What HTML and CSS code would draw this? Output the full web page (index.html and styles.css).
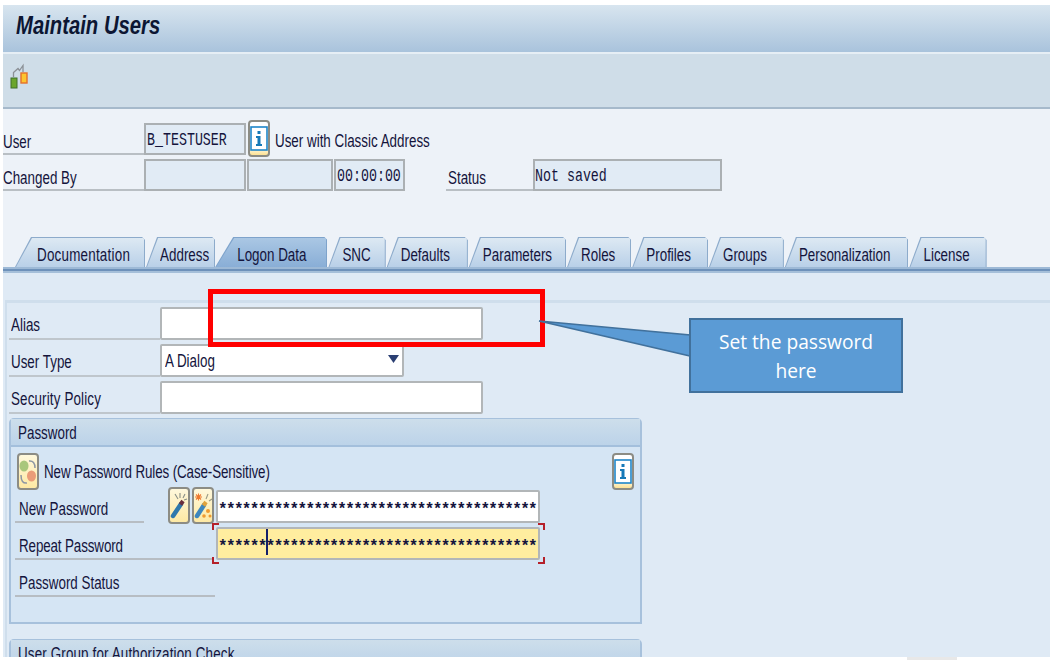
FILE: index.html
```html
<!DOCTYPE html>
<html lang="en">
<head>
<meta charset="utf-8">
<title>Maintain Users</title>
<link rel="stylesheet" href="styles.css">
</head>
<body>
<div class="page">
  <div class="window">
    <header class="title"><h1><span class="t">Maintain Users</span></h1></header>
    <div class="toolbar">
      <svg class="tool-icon" width="20" height="26" viewBox="0 0 20 26">
        <path d="M3.500 14 V9.500 L8 5.500 L9.500 7.500 L13 2.500 V9" fill="none" stroke="#8b9096" stroke-width="1.300"/>
        <rect x="1" y="15" width="6" height="10" fill="#6aa52c" stroke="#3f6f2a"/>
        <rect x="11" y="10" width="6" height="10" fill="#fdc52f" stroke="#e4702a" stroke-width="1.400"/>
      </svg>
    </div>
    <section class="head">
      <div class="head-row">
        <label class="head-label"><span class="t">User</span></label>
        <div class="ro mono w-user"><span class="t">B_TESTUSER</span></div>
        <button class="icon-btn info-btn head-info">
          <svg width="18" height="28" viewBox="0 0 18 28"><rect x="1" y="2" width="16" height="23" fill="#fff" stroke="#1f86c9" stroke-width="1.600"/><path d="M7.500 6h3v3h-3zM6 11h4.500v8H12v2H6v-2h1.500v-6H6z" fill="#1579b8"/></svg>
        </button>
        <span class="head-note"><span class="t">User with Classic Address</span></span>
      </div>
      <div class="head-row second">
        <label class="head-label"><span class="t">Changed By</span></label>
        <div class="ro w-user"></div>
        <div class="ro w-date"></div>
        <div class="ro mono w-time"><span class="t">00:00:00</span></div>
        <label class="head-label status-label"><span class="t">Status</span></label>
        <div class="ro mono w-status"><span class="t">Not saved</span></div>
      </div>
    </section>
    <nav class="tabs">
      <a class="tab first"><span class="t">Documentation</span></a>
      <a class="tab tab-address"><span class="t">Address</span></a>
      <a class="tab active"><span class="t">Logon Data</span></a>
      <a class="tab tab-snc"><span class="t">SNC</span></a>
      <a class="tab"><span class="t">Defaults</span></a>
      <a class="tab tab-parameters"><span class="t">Parameters</span></a>
      <a class="tab tab-roles"><span class="t">Roles</span></a>
      <a class="tab tab-compact"><span class="t">Profiles</span></a>
      <a class="tab tab-compact"><span class="t">Groups</span></a>
      <a class="tab"><span class="t">Personalization</span></a>
      <a class="tab tab-compact"><span class="t">License</span></a>
    </nav>
    <main class="content">
      <div class="panel">
        <div class="form-row">
          <label class="form-label"><span class="t">Alias</span></label>
          <div class="input w-alias"></div>
        </div>
        <div class="form-row">
          <label class="form-label"><span class="t">User Type</span></label>
          <div class="input w-select"><span class="t">A Dialog</span><svg class="caret-down" width="11" height="8" viewBox="0 0 11 8"><path d="M0 0h11L5.500 8z" fill="#2b3f73"/></svg></div>
        </div>
        <div class="form-row">
          <label class="form-label"><span class="t wide-text">Security Policy</span></label>
          <div class="input w-alias"></div>
        </div>
        <section class="group pw-group">
          <div class="group-head"><span class="t">Password</span></div>
          <div class="group-body">
            <div class="rule-row">
              <button class="icon-btn rule-btn">
                <svg width="18" height="32" viewBox="0 0 18 32">
                  <ellipse cx="5" cy="10" rx="4.500" ry="5.500" fill="#a9c77c"/>
                  <ellipse cx="12.500" cy="20" rx="4.500" ry="5.500" fill="#ea9c78"/>
                  <path d="M10 5 C14 4.500 16 7 16 12M8 27 C4 27.500 2 25 2 19" fill="none" stroke="#8d97a3" stroke-width="1.500"/>
                </svg>
              </button>
              <span class="rule-text"><span class="t narrow-text">New Password Rules (Case-Sensitive)</span></span>
              <button class="icon-btn info-btn rule-info">
                <svg width="18" height="28" viewBox="0 0 18 28"><rect x="1" y="2" width="16" height="23" fill="#fff" stroke="#1f86c9" stroke-width="1.600"/><path d="M7.500 6h3v3h-3zM6 11h4.500v8H12v2H6v-2h1.500v-6H6z" fill="#1579b8"/></svg>
              </button>
            </div>
            <div class="pw-row">
              <label class="pw-label short"><span class="t">New Password</span></label>
              <button class="icon-btn wand-btn">
                <svg width="18" height="32" viewBox="0 0 18 32">
                  <path d="M3 26 L11 14" stroke="#2f79ac" stroke-width="4.500" stroke-linecap="round"/>
                  <path d="M10.500 14.500 L13 11" stroke="#6b2f3c" stroke-width="4"/>
                  <path d="M5 4l3 5M10 3v5M15 4l-2 4M17 9l-3 1" stroke="#8a8f86" stroke-width="1.100" fill="none"/>
                </svg>
              </button>
              <button class="icon-btn wand-btn">
                <svg width="18" height="32" viewBox="0 0 18 32">
                  <path d="M3 26 L10 15" stroke="#3d86bd" stroke-width="4.500" stroke-linecap="round"/>
                  <path d="M9.500 15.500 L12 12" stroke="#e0a23a" stroke-width="4"/>
                  <path d="M1 7h7M4.500 3.500v7M2 4.500l5 5M7 4.500l-5 5" stroke="#ee7a30" stroke-width="1.100"/>
                  <path d="M12 9l2-5M15 11l3-2" stroke="#9a9a86" stroke-width="1.100"/>
                  <circle cx="14" cy="21" r="2" fill="#ef9a2f"/><circle cx="10" cy="26" r="1.800" fill="#ef9a2f"/><circle cx="16" cy="26" r="1.500" fill="#ef9a2f"/>
                </svg>
              </button>
              <div class="input pw-input mono"><span class="stars">****************************************</span></div>
            </div>
            <div class="pw-row">
              <label class="pw-label wide"><span class="t narrow-text">Repeat Password</span></label>
              <div class="focus">
                <div class="input pw-input mono active"><span class="stars">******</span><span class="cursor"></span><span class="stars">**********************************</span></div>
                <i class="corner tl"></i><i class="corner tr"></i><i class="corner bl"></i><i class="corner br"></i>
              </div>
            </div>
            <div class="pw-row">
              <label class="pw-label full"><span class="t">Password Status</span></label>
            </div>
          </div>
        </section>
        <section class="group auth-group">
          <div class="group-head"><span class="t wide-text">User Group for Authorization Check</span></div>
        </section>
      </div>
    </main>
  </div>
  <div class="annotation-box"></div>
  <svg class="annotation-tail" width="155" height="40" viewBox="0 0 155 40">
    <path d="M1 1 L152 15 V36 Z" fill="#5b9bd5" stroke="#41719c" stroke-width="1.500"/>
  </svg>
  <div class="annotation-note">Set the password here</div>
</div>
</body>
</html>
```

FILE: styles.css
```css
* { box-sizing: border-box; }
html, body { margin: 0; padding: 0; background: #fff; }
body { font-family: "Liberation Sans", Arial, sans-serif; font-size: 13.400px; color: #14143c; }

/* The source is a vertically stretched capture: glyphs keep their natural width and grow in height. */
.t { display: inline-block; transform: scaleY(1.38); white-space: nowrap; }
.wide-text { letter-spacing: .15px; }
.narrow-text { letter-spacing: -.12px; }

.page { position: relative; width: 1050px; height: 660px; padding: 5px 0 3px 3px; overflow: hidden; background: #fff; }
.page::after { content: ""; position: absolute; left: 907px; bottom: 0; width: 50px; height: 3px; background: #e8e8e8; }
.window { height: 652px; display: flex; flex-direction: column; overflow: hidden; }

.title { height: 49px; flex: none; display: flex; align-items: center; padding-left: 13px; padding-bottom: 6px;
  background: linear-gradient(#d8e5ef, #a9c3dc); border-bottom: 2px solid #e6eef5; }
.title h1 { margin: 0; font-size: 20.300px; font-weight: bold; font-style: italic; color: #0c1633; }
.title .t { transform: scaleY(1.26); }

.toolbar { height: 55px; flex: none; display: flex; align-items: flex-start; padding: 9px 0 0 7px;
  background: #cfdde8; border-bottom: 2px solid #a6b9cb; }

.head { flex: none; height: 128px; padding-top: 15px; background: #edf2f8; }
.head-row { display: flex; align-items: flex-end; height: 31px; }
.head-row.second { margin-top: 5px; }
.head-label { width: 141px; height: 100%; line-height: 36px; border-bottom: 2px solid #b9bfc4; }
.status-label { width: 87px; margin-left: 40px; padding-left: 2px; }
.ro { height: 32px; border: 2px solid #abb0b3; background: #e1ebf5; margin-right: 1px; line-height: 31px; }
.mono { font-family: "Liberation Mono", monospace; font-size: 13.300px; }
.w-user { width: 102px; padding-left: 1px; }
.w-date { width: 86px; }
.w-time { width: 71px; padding-left: 1px; }
.w-status { width: 189px; }

.icon-btn { padding: 0; flex: none; display: flex; align-items: center; justify-content: center; width: 22px; height: 37px;
  border: 2px solid #8c8c84; border-radius: 4px; background: linear-gradient(#fff8dc, #fde9a4); }
.info-btn { background: linear-gradient(#fff 72%, #fde293); }
.head-info { margin: 0 5px 0 1px; align-self: flex-end; position: relative; top: 2px; }
.head-note { line-height: 28px; }

.tabs { flex: none; display: flex; height: 36px; padding: 0 0 6px 12px;
  background: linear-gradient(#edf2f8 0 30px, #9db9d6 30px 32px, #6d91ba 32px 34px, #a5bfd9 34px 36px); }
.tab { position: relative; z-index: 1; display: block; height: 30px; padding: 0 18px 0 14px; margin-right: 1px; line-height: 35px;
  background: #8dabcb; clip-path: polygon(11px 0, calc(100% - 3px) 0, 100% 3px, 100% 100%, 0 100%); }
.tab::before { content: ""; position: absolute; z-index: -1; inset: 1px 1px 0 1px;
  background: linear-gradient(#dde9f3, #b9d0e8); clip-path: polygon(11px 0, 100% 0, 100% 100%, 0 100%); }
.tab.first { padding: 0 15px 0 22px; letter-spacing: .23px; clip-path: polygon(16px 0, calc(100% - 3px) 0, 100% 3px, 100% 100%, 0 100%); }
.tab.first::before { clip-path: polygon(16px 0, 100% 0, 100% 100%, 0 100%); }
.tab.active { padding: 0 21px 0 22px; margin-left: -1px; z-index: 2; background: #7ea3cb; clip-path: polygon(18px 0, calc(100% - 3px) 0, 100% 3px, 100% 100%, 0 100%); }
.tab.active::before { background: linear-gradient(#aac7e4, #89aed6); clip-path: polygon(18px 0, 100% 0, 100% 100%, 0 100%); }
.tab-address { padding-right: 6px; }
.tab-snc { padding-right: 15px; }
.tab-parameters { padding-right: 14px; }
.tab-roles { padding-right: 16px; }
.tab-compact { padding-right: 17px; }

.content { flex: 1; min-height: 0; background: #dfeaf5; padding: 27px 0 0 2px; }
.panel { height: 100%; border-top: 3px solid #cfdeec; border-left: 2px solid #cfdeec; padding: 4px 0 0 2px; }

.form-row { display: flex; height: 33px; margin-bottom: 4px; }
.form-label { width: 151px; padding-left: 2px; line-height: 36px; border-bottom: 2px solid #bfc6cc; }
.input { height: 33px; background: #fff; border: 2px solid #b2b6b8; border-radius: 2px; line-height: 29px; }
.w-alias { width: 323px; }
.w-select { width: 244px; padding-left: 3px; display: flex; justify-content: space-between; }
.caret-down { margin: 9px 3px 0 0; }

.group { width: 633px; border: 2px solid #a7c1dc; border-radius: 5px 5px 0 0; background: #d5e5f4; }
.group-head { height: 28px; padding-left: 7px; line-height: 27px;
  background: linear-gradient(#cddeeb, #bcd3e9); border-bottom: 2px solid #a3bfdc; margin-top: -1px; }
.pw-group { height: 206px; }
.auth-group { margin-top: 15px; }
.group-body { padding: 6px 6px 0 4px; }

.rule-row { display: flex; align-items: center; height: 37px; padding-left: 2px; }
.rule-text { flex: 1; margin-left: 5px; line-height: 39px; }

.pw-row { display: flex; height: 33px; margin-bottom: 4px; }
.pw-label { line-height: 38px; padding-left: 4px; border-bottom: 2px solid #b7bdc3; }
.pw-label.short { width: 129px; margin-right: 24px; }
.pw-label.wide { width: 197px; }
.pw-label.full { width: 200px; }
.wand-btn { margin: 0 2px 0 0; position: relative; top: -3px; }
.pw-input { width: 324px; line-height: 29px; padding-left: 0; white-space: nowrap; overflow: hidden; }
.pw-input.active { background: #ffed9f; }
.stars { display: inline-block; font-size: 16px; font-weight: bold; letter-spacing: -1.650px; transform: translateY(4px); }
.focus { position: relative; margin-left: 4px; }
.cursor { display: inline-block; width: 2px; height: 26px; margin-right: -2px; background: #14206a; vertical-align: -8px; }
.corner { position: absolute; width: 7px; height: 7px; border: 0 solid #b5202a; }
.corner.tl { left: -4px; top: -4px; border-width: 2px 0 0 2px; }
.corner.tr { right: -5px; top: -4px; border-width: 2px 2px 0 0; }
.corner.bl { left: -4px; bottom: -4px; border-width: 0 0 2px 2px; }
.corner.br { right: -5px; bottom: -4px; border-width: 0 2px 2px 0; }

.annotation-box { position: absolute; left: 208px; top: 289px; width: 337px; height: 58px; border: 5px solid #ff0000; }
.annotation-tail { position: absolute; left: 538px; top: 320px; }
.annotation-note { position: absolute; left: 689px; top: 318px; width: 214px; height: 75px; padding: 7px 20px 0; border: 2px solid #41719c; background: #5b9bd5;
  color: #fff; font-family: "Open Sans", sans-serif; font-size: 19.200px; line-height: 29px; text-align: center; }
```
